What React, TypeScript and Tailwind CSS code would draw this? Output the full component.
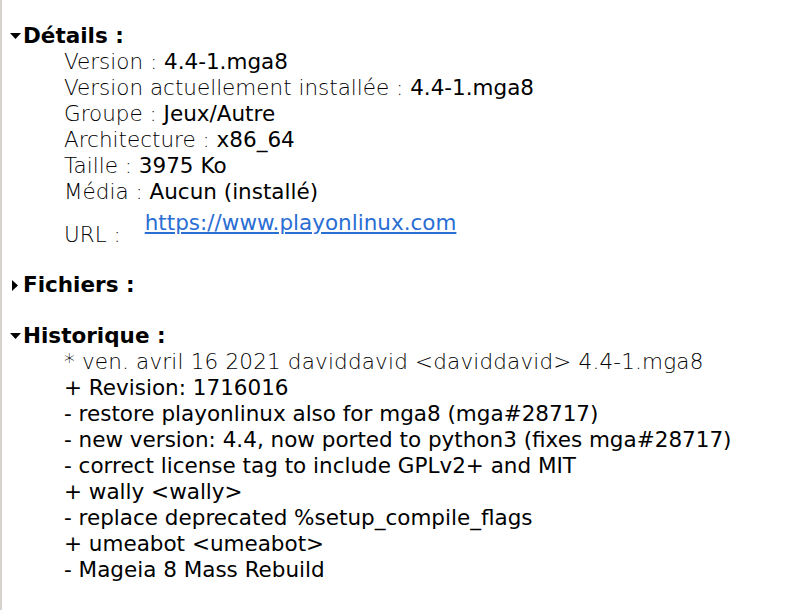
import React from "react"

const font = { fontFamily: '"DejaVu Sans", "Liberation Sans", sans-serif' }

function Toggle({ open }: { open: boolean }) {
  return open ? (
    <svg className="w-[11px] h-[7px] mr-[2px]" viewBox="0 0 11 7">
      <path d="M0 0h11L5.5 6z" fill="#000" />
    </svg>
  ) : (
    <svg className="w-[7px] h-[11px] ml-[2px] mr-[4px]" viewBox="0 0 7 11">
      <path d="M0 0v11l6-5.5z" fill="#000" />
    </svg>
  )
}

function Heading({ open, title }: { open: boolean; title: string }) {
  return (
    <div className="flex items-center h-[26px] pl-[8px]">
      <Toggle open={open} />
      <span className="font-bold">{title}</span>
    </div>
  )
}

const details = [
  ["Version :", "4.4-1.mga8"],
  ["Version actuellement installée :", "4.4-1.mga8"],
  ["Groupe :", "Jeux/Autre"],
  ["Architecture :", "x86_64"],
  ["Taille :", "3975 Ko"],
  ["Média :", "Aucun (installé)"],
]

const history = [
  "+ Revision: 1716016",
  "- restore playonlinux also for mga8 (mga#28717)",
  "- new version: 4.4, now ported to python3 (fixes mga#28717)",
  "- correct license tag to include GPLv2+ and MIT",
  "+ wally <wally>",
  "- replace deprecated %setup_compile_flags",
  "+ umeabot <umeabot>",
  "- Mageia 8 Mass Rebuild",
]

export default function App() {
  return (
    <div
      className="w-[806px] h-[610px] bg-white border-l-2 border-[#d6d3cf] text-black text-[21.5px] leading-[26px] pt-[23px] overflow-hidden"
      style={font}
    >
      <Heading open title="Détails :" />
      <div className="pl-[62px]">
        {details.map(([label, value]) => (
          <div key={label} className="h-[26px] whitespace-nowrap">
            <span className="font-extralight">{label}</span> <span>{value}</span>
          </div>
        ))}
        <div className="flex h-[43px] whitespace-nowrap">
          <span className="font-extralight self-end">URL :</span>
          <a href="#" className="ml-[24px] mt-[5px] self-start text-[#2a6ed3] underline">
            https://www.playonlinux.com
          </a>
        </div>
      </div>

      <div className="mt-[24px]">
        <Heading open={false} title="Fichiers :" />
      </div>

      <div className="mt-[25px]">
        <Heading open title="Historique :" />
      </div>
      <div className="pl-[62px] whitespace-nowrap">
        <div className="h-[26px] font-extralight tracking-[0.18px]">
          * ven. avril 16 2021 daviddavid &lt;daviddavid&gt; 4.4-1.mga8
        </div>
        {history.map((line) => (
          <div key={line} className="h-[26px]">
            {line}
          </div>
        ))}
      </div>
    </div>
  )
}
